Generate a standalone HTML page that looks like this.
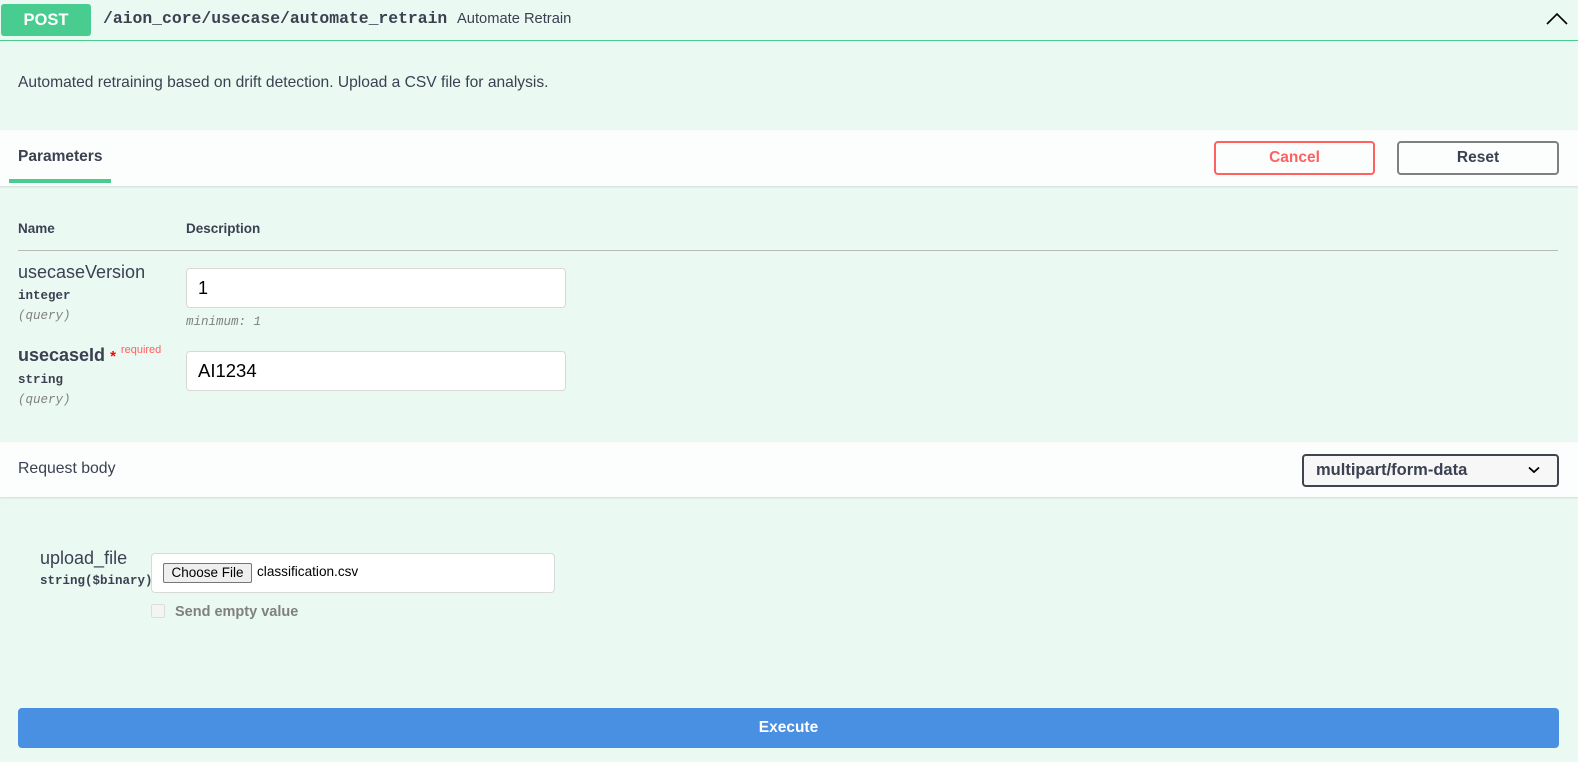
<!DOCTYPE html>
<html><head><meta charset="utf-8"><style>
*{box-sizing:border-box;margin:0;padding:0}
body{width:1578px;height:762px;background:#ebf9f3;font-family:"Liberation Sans",sans-serif;color:#3b4151;position:relative;overflow:hidden}
.a{position:absolute;white-space:nowrap}
.mono{font-family:"Liberation Mono","DejaVu Sans Mono",monospace}
</style></head><body>
<div class="a" style="left:0;top:0;width:1578px;height:41px;border-bottom:1px solid #49cc90"></div>
<div class="a" style="left:1px;top:4px;width:90px;height:32px;background:#49cc90;border-radius:3px;color:#fff;font-weight:bold;font-size:16.5px;text-align:center;line-height:32px">POST</div>
<div class="a mono" style="left:103px;top:9px;font-size:16.4px;font-weight:bold;color:#3b4151">/aion_core/usecase/automate_retrain</div>
<div class="a" style="left:457px;top:11px;font-size:14.7px;color:#3b4151">Automate Retrain</div>
<svg class="a" style="left:1546px;top:12px" width="22" height="14" viewBox="0 0 22 14"><path d="M1 12 L11 2 L21 12" stroke="#000" stroke-width="1.6" fill="none"/></svg>
<div class="a" style="left:18px;top:74px;font-size:15.6px">Automated retraining based on drift detection. Upload a CSV file for analysis.</div>

<div class="a" style="left:0;top:130px;width:1578px;height:56px;background:#fbfefd;box-shadow:0 1px 2px rgba(0,0,0,.12)"></div>
<div class="a" style="left:18px;top:148px;font-size:15.5px;font-weight:bold">Parameters</div>
<div class="a" style="left:9px;top:179px;width:102px;height:4px;background:#49cc90"></div>
<div class="a" style="left:1214px;top:141px;width:161px;height:34px;border:2px solid #ff6060;border-radius:4px;color:#ff6060;font-weight:bold;font-size:15.5px;text-align:center;line-height:30px;background:transparent">Cancel</div>
<div class="a" style="left:1397px;top:141px;width:162px;height:34px;border:2px solid #808080;border-radius:4px;color:#3b4151;font-weight:bold;font-size:15.5px;text-align:center;line-height:30px">Reset</div>

<div class="a" style="left:18px;top:221px;font-size:13.5px;font-weight:bold">Name</div>
<div class="a" style="left:186px;top:221px;font-size:13.5px;font-weight:bold">Description</div>
<div class="a" style="left:18px;top:250px;width:1540px;height:1px;background:#b6b9be"></div>

<div class="a" style="left:18px;top:262px;font-size:18px">usecaseVersion</div>
<div class="a mono" style="left:18px;top:289px;font-size:12.5px;font-weight:bold">integer</div>
<div class="a mono" style="left:18px;top:309px;font-size:12.5px;font-style:italic;color:#808080">(query)</div>
<div class="a" style="left:186px;top:268px;width:380px;height:40px;background:#fff;border:1px solid #d9d9d9;border-radius:4px;font-size:18px;color:#000;padding:9px 11px">1</div>
<div class="a mono" style="left:186px;top:315px;font-size:12.5px;font-style:italic;color:#808080">minimum: 1</div>

<div class="a" style="left:18px;top:345px;font-size:18px;font-weight:bold">usecaseId <span style="color:red;font-size:15px">*</span> <span style="color:#ff6060;font-size:11px;font-weight:normal;position:relative;top:-8px">required</span></div>
<div class="a mono" style="left:18px;top:373px;font-size:12.5px;font-weight:bold">string</div>
<div class="a mono" style="left:18px;top:393px;font-size:12.5px;font-style:italic;color:#808080">(query)</div>
<div class="a" style="left:186px;top:351px;width:380px;height:40px;background:#fff;border:1px solid #d9d9d9;border-radius:4px;font-size:18.5px;color:#000;padding:8px 11px">AI1234</div>

<div class="a" style="left:0;top:442px;width:1578px;height:55px;background:#fbfefd;box-shadow:0 1px 2px rgba(0,0,0,.12)"></div>
<div class="a" style="left:18px;top:460px;font-size:15.8px">Request body</div>
<div class="a" style="left:1302px;top:454px;width:257px;height:33px;background:#f7f7f7;border:2px solid #41444e;border-radius:4px;font-size:16.5px;font-weight:bold;padding:5px 12px">multipart/form-data</div>
<svg class="a" style="left:1528px;top:466px" width="12" height="8" viewBox="0 0 12 8"><path d="M1 1.5 L6 6 L11 1.5" stroke="#000" stroke-width="1.8" fill="none"/></svg>

<div class="a" style="left:40px;top:548px;font-size:18px">upload_file</div>
<div class="a mono" style="left:40px;top:574px;font-size:12.5px;font-weight:bold">string($binary)</div>
<div class="a" style="left:151px;top:553px;width:404px;height:40px;background:#fff;border:1px solid #d9d9d9;border-radius:4px"></div>
<div class="a" style="left:163px;top:563px;width:89px;height:20px;background:#efefef;border:1px solid #767676;border-radius:2px;font-size:13.5px;color:#000;text-align:center;line-height:18px">Choose File</div>
<div class="a" style="left:257px;top:564px;font-size:13.6px;color:#000">classification.csv</div>
<div class="a" style="left:151px;top:604px;width:14px;height:14px;border:1px solid #dcdcdc;border-radius:2px;background:#f4f4f4"></div>
<div class="a" style="left:175px;top:604px;font-size:14.5px;font-weight:bold;color:#808080">Send empty value</div>

<div class="a" style="left:18px;top:708px;width:1541px;height:40px;background:#4990e2;border-radius:4px;color:#fff;font-weight:bold;font-size:15.5px;text-align:center;line-height:40px">Execute</div>
</body></html>
